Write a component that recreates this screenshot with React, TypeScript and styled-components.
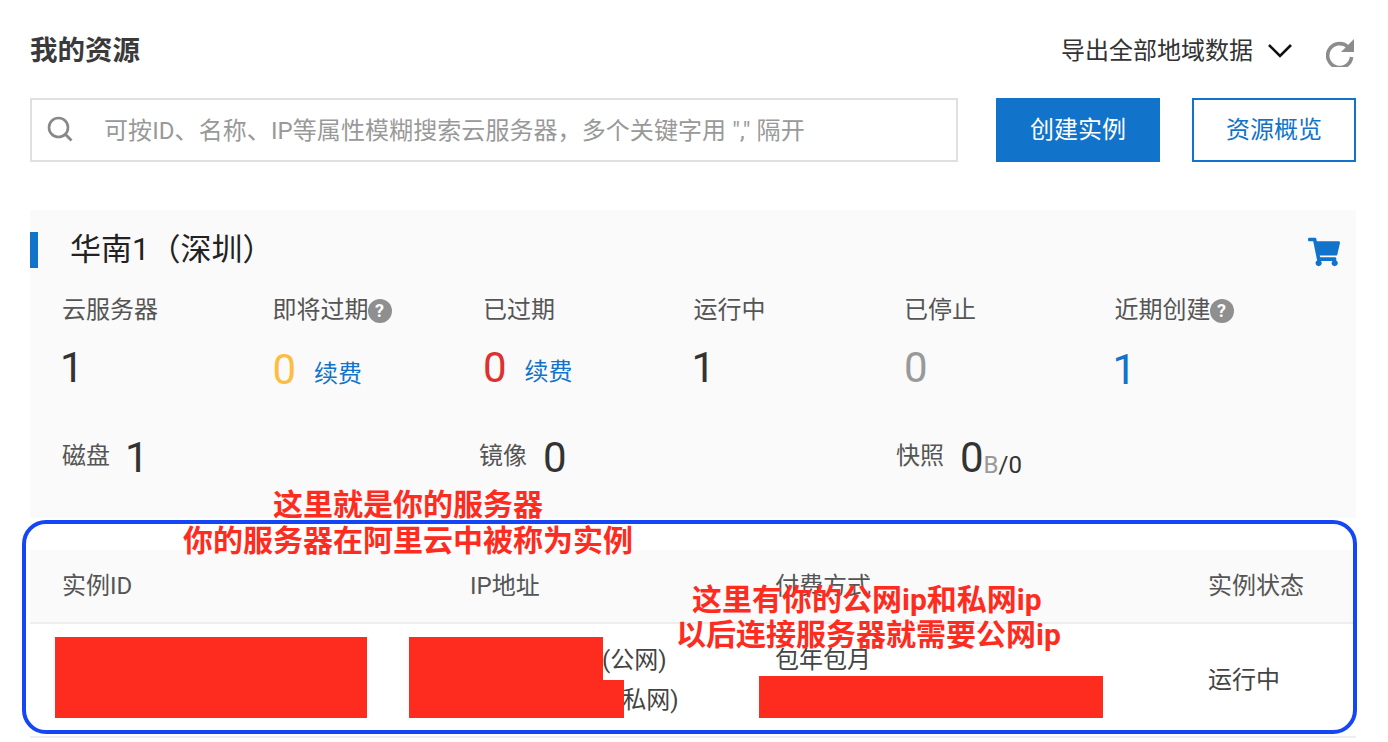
import React from 'react';
import { FaShoppingCart } from 'react-icons/fa';
import styled, { createGlobalStyle } from 'styled-components';

const FONT = 'Roboto, "Noto Sans CJK SC", sans-serif';
const BLUE = '#1173c9';
const MARK_RED = '#fe2c1e';

const GlobalStyle = createGlobalStyle`
  html, body {
    margin: 0;
    padding: 0;
    background: #fff;
  }
  body {
    font-family: ${FONT};
    color: #333;
  }
  * {
    box-sizing: border-box;
  }
`;

const Page = styled.div`
  position: relative;
  width: 1388px;
  height: 742px;
  padding: 30px 32px 0 30px;
  overflow: hidden;
`;

const Header = styled.header`
  display: flex;
  align-items: center;
  justify-content: space-between;
  height: 42px;
  margin-bottom: 26px;
`;

const Title = styled.h1`
  margin: 0;
  font-size: 27.5px;
  line-height: 42px;
  font-weight: 700;
  color: #3a3a3a;
`;

const HeaderTools = styled.div`
  display: flex;
  align-items: center;
  padding-right: 2px;
`;

const ExportLabel = styled.span`
  font-size: 24px;
  line-height: 42px;
  color: #333;
  margin-right: 14px;
`;

const Chevron = styled.svg`
  display: block;
  width: 26px;
  height: 16px;
  margin-right: 33px;
`;

const RefreshIcon = styled.svg`
  display: block;
  width: 28px;
  height: 28px;
  margin-top: 4px;
`;

const SearchRow = styled.div`
  display: flex;
  height: 64px;
  margin-bottom: 48px;
`;

const SearchBox = styled.div`
  display: flex;
  align-items: center;
  width: 928px;
  margin-right: 38px;
  padding-left: 15px;
  border: 2px solid #e0e0e0;
  background: #fff;
`;

const SearchIcon = styled.svg`
  display: block;
  flex: none;
  width: 26px;
  height: 26px;
  margin-right: 31px;
  margin-bottom: 2px;
`;

const SearchInput = styled.input`
  flex: 1;
  min-width: 0;
  height: 40px;
  border: 0;
  outline: 0;
  padding: 2px 0 0;
  background: transparent;
  font-family: ${FONT};
  font-size: 24px;
  line-height: 36px;
  letter-spacing: 0.08px;

  &::placeholder {
    color: #999;
    opacity: 1;
  }
`;

const ActionButton = styled.button<{ $primary?: boolean }>`
  width: 164px;
  height: 64px;
  padding: 0;
  border: 2px solid ${BLUE};
  border-radius: 0;
  background: ${(p) => (p.$primary ? BLUE : '#fff')};
  color: ${(p) => (p.$primary ? '#fff' : BLUE)};
  font-family: ${FONT};
  font-size: 24px;
  line-height: 60px;

  & + & {
    margin-left: 32px;
  }
`;

const RegionPanel = styled.section`
  height: 308px;
  padding-top: 22px;
  background: #fafafa;
`;

const RegionHead = styled.div`
  display: flex;
  align-items: center;
  justify-content: space-between;
  height: 36px;
  padding-right: 16px;
  margin-bottom: 30px;
`;

const RegionName = styled.h2`
  margin: 0;
  padding-left: 32px;
  border-left: 8px solid ${BLUE};
  font-size: 31px;
  line-height: 36px;
  font-weight: 400;
  color: #222;
`;

const CartIcon = styled(FaShoppingCart)`
  display: block;
  margin-top: 4px;
  color: ${BLUE};
`;

const StatGrid = styled.div`
  display: grid;
  grid-template-columns: repeat(6, 210.5px);
  padding-left: 32px;
  margin-bottom: 42px;
`;

const StatLabel = styled.div`
  display: flex;
  align-items: center;
  height: 24px;
  margin-bottom: 22px;
  font-size: 24px;
  line-height: 24px;
  color: #555;
`;

const Help = styled.span`
  display: inline-flex;
  align-items: center;
  justify-content: center;
  width: 24px;
  height: 24px;
  margin-top: 2px;
  margin-left: -1px;
  border-radius: 50%;
  background: #8f8f8f;
  color: #fff;
  font-size: 18px;
  font-weight: 700;
`;

const ValueLine = styled.div<{ $low?: boolean }>`
  display: flex;
  align-items: center;
  height: 48px;
  padding-top: ${(p) => (p.$low ? 3 : 0)}px;
`;

// the 1 has a wide left bearing in this font, so it is pulled back a little
const BigNumber = styled.span<{ $color?: string; $pull?: number }>`
  margin-left: ${(p) => -(p.$pull || 0)}px;
  font-size: 42px;
  font-weight: 400;
  line-height: 48px;
  color: ${(p) => p.$color || '#333'};
`;

const RenewLink = styled.a`
  margin-left: 18px;
  margin-top: 8px;
  font-size: 24px;
  line-height: 30px;
  color: ${BLUE};
`;

const TotalsRow = styled.div`
  display: grid;
  grid-template-columns: repeat(3, 417px);
  padding-left: 32px;
`;

const TotalItem = styled.div`
  display: flex;
  align-items: center;
  height: 48px;
`;

const TotalLabel = styled.span`
  margin-right: 16px;
  margin-bottom: 4px;
  font-size: 24px;
  line-height: 30px;
  color: #555;
`;

const Unit = styled.span<{ $muted?: boolean }>`
  margin-top: 14px;
  font-size: 24px;
  line-height: 30px;
  color: ${(p) => (p.$muted ? '#999' : '#333')};
`;

const Table = styled.div`
  margin-top: 32px;
  border-bottom: 2px solid #eee;
`;

const TableHead = styled.div`
  display: grid;
  grid-template-columns: 408px 305px 433px 1fr;
  align-items: center;
  height: 74px;
  padding-left: 32px;
  background: #fafafa;
  border-bottom: 2px solid #eee;
  font-size: 24px;
  line-height: 40px;
  color: #555;
`;

const TableRow = styled.div`
  display: grid;
  grid-template-columns: 408px 305px 433px 1fr;
  align-items: center;
  height: 112px;
  padding-left: 32px;
  font-size: 24px;
  line-height: 40px;
  color: #444;
`;

const CellLine = styled.div<{ $indent?: number }>`
  height: 40px;
  padding-left: ${(p) => p.$indent || 0}px;
  white-space: nowrap;
`;

/* everything below is the red and blue markup drawn on top of the screenshot */
const Outline = styled.div`
  position: absolute;
  left: 22px;
  top: 520px;
  width: 1335px;
  height: 214px;
  border: 4px solid #1446f5;
  border-radius: 24px;
`;

const Cover = styled.div<{ $x: number; $y: number; $w: number; $h: number }>`
  position: absolute;
  left: ${(p) => p.$x}px;
  top: ${(p) => p.$y}px;
  width: ${(p) => p.$w}px;
  height: ${(p) => p.$h}px;
  background: ${MARK_RED};
`;

const Note = styled.div<{ $x: number; $y: number }>`
  position: absolute;
  left: ${(p) => p.$x}px;
  top: ${(p) => p.$y}px;
  font-size: 30px;
  line-height: 36px;
  font-weight: 700;
  color: ${MARK_RED};
  white-space: nowrap;
`;

const stats = [
  { label: '云服务器', value: '1', pull: 2 },
  { label: '即将过期', help: true, value: '0', color: '#fdbd45', renew: true, low: true },
  { label: '已过期', value: '0', color: '#df2f2f', renew: true },
  { label: '运行中', value: '1', pull: 2 },
  { label: '已停止', value: '0', color: '#999' },
  { label: '近期创建', help: true, value: '1', color: BLUE, low: true, pull: 2 }
];

const App: React.FC = () => (
  <Page>
    <GlobalStyle />
    <Header>
      <Title>我的资源</Title>
      <HeaderTools>
        <ExportLabel>导出全部地域数据</ExportLabel>
        <Chevron viewBox="0 0 26 16">
          <path d="M2 2 L13 13 L24 2" fill="none" stroke="#111" strokeWidth="2.6" />
        </Chevron>
        <RefreshIcon viewBox="0 0 28 28">
          <path
            d="M21.5 7.5 A12 12 0 1 0 25.6 18"
            fill="none"
            stroke="#8c8c8c"
            strokeWidth="3.6"
          />
          <path d="M28 0 V13 H15 Z" fill="#8c8c8c" />
        </RefreshIcon>
      </HeaderTools>
    </Header>

    <SearchRow>
      <SearchBox>
        <SearchIcon viewBox="0 0 26 26">
          <circle cx="11.5" cy="11.5" r="9.5" fill="none" stroke="#888" strokeWidth="2.6" />
          <path d="M18.5 18.5 L24.5 24.5" stroke="#888" strokeWidth="2.8" />
        </SearchIcon>
        <SearchInput placeholder='可按ID、名称、IP等属性模糊搜索云服务器，多个关键字用 "," 隔开' />
      </SearchBox>
      <ActionButton $primary>创建实例</ActionButton>
      <ActionButton>资源概览</ActionButton>
    </SearchRow>

    <RegionPanel>
      <RegionHead>
        <RegionName>华南1（深圳）</RegionName>
        <CartIcon size={32} />
      </RegionHead>
      <StatGrid>
        {stats.map(({ label, help, value, color, renew, low, pull }) => (
          <div key={label}>
            <StatLabel>
              {label}
              {help && <Help>?</Help>}
            </StatLabel>
            <ValueLine $low={low}>
              <BigNumber $color={color} $pull={pull}>
                {value}
              </BigNumber>
              {renew && <RenewLink>续费</RenewLink>}
            </ValueLine>
          </div>
        ))}
      </StatGrid>
      <TotalsRow>
        <TotalItem>
          <TotalLabel>磁盘</TotalLabel>
          <BigNumber $pull={1}>1</BigNumber>
        </TotalItem>
        <TotalItem>
          <TotalLabel>镜像</TotalLabel>
          <BigNumber>0</BigNumber>
        </TotalItem>
        <TotalItem>
          <TotalLabel>快照</TotalLabel>
          <BigNumber>0</BigNumber>
          <Unit $muted>B</Unit>
          <Unit>/0</Unit>
        </TotalItem>
      </TotalsRow>
    </RegionPanel>

    <Table>
      <TableHead>
        <span>实例ID</span>
        <span>IP地址</span>
        <span>付费方式</span>
        <span>实例状态</span>
      </TableHead>
      <TableRow>
        <span />
        <div>
          <CellLine $indent={132}>(公网)</CellLine>
          <CellLine $indent={144}>(私网)</CellLine>
        </div>
        <div>
          <CellLine>包年包月</CellLine>
          <CellLine />
        </div>
        <span>运行中</span>
      </TableRow>
    </Table>

    <Outline />
    <Cover $x={55} $y={637} $w={312} $h={81} />
    <Cover $x={409} $y={637} $w={194} $h={81} />
    <Cover $x={603} $y={680} $w={21} $h={38} />
    <Cover $x={759} $y={676} $w={344} $h={42} />
    <Note $x={273} $y={487}>这里就是你的服务器</Note>
    <Note $x={183} $y={523}>你的服务器在阿里云中被称为实例</Note>
    <Note $x={692} $y={582}>这里有你的公网ip和私网ip</Note>
    <Note $x={676} $y={617}>以后连接服务器就需要公网ip</Note>
  </Page>
);

export default App;
